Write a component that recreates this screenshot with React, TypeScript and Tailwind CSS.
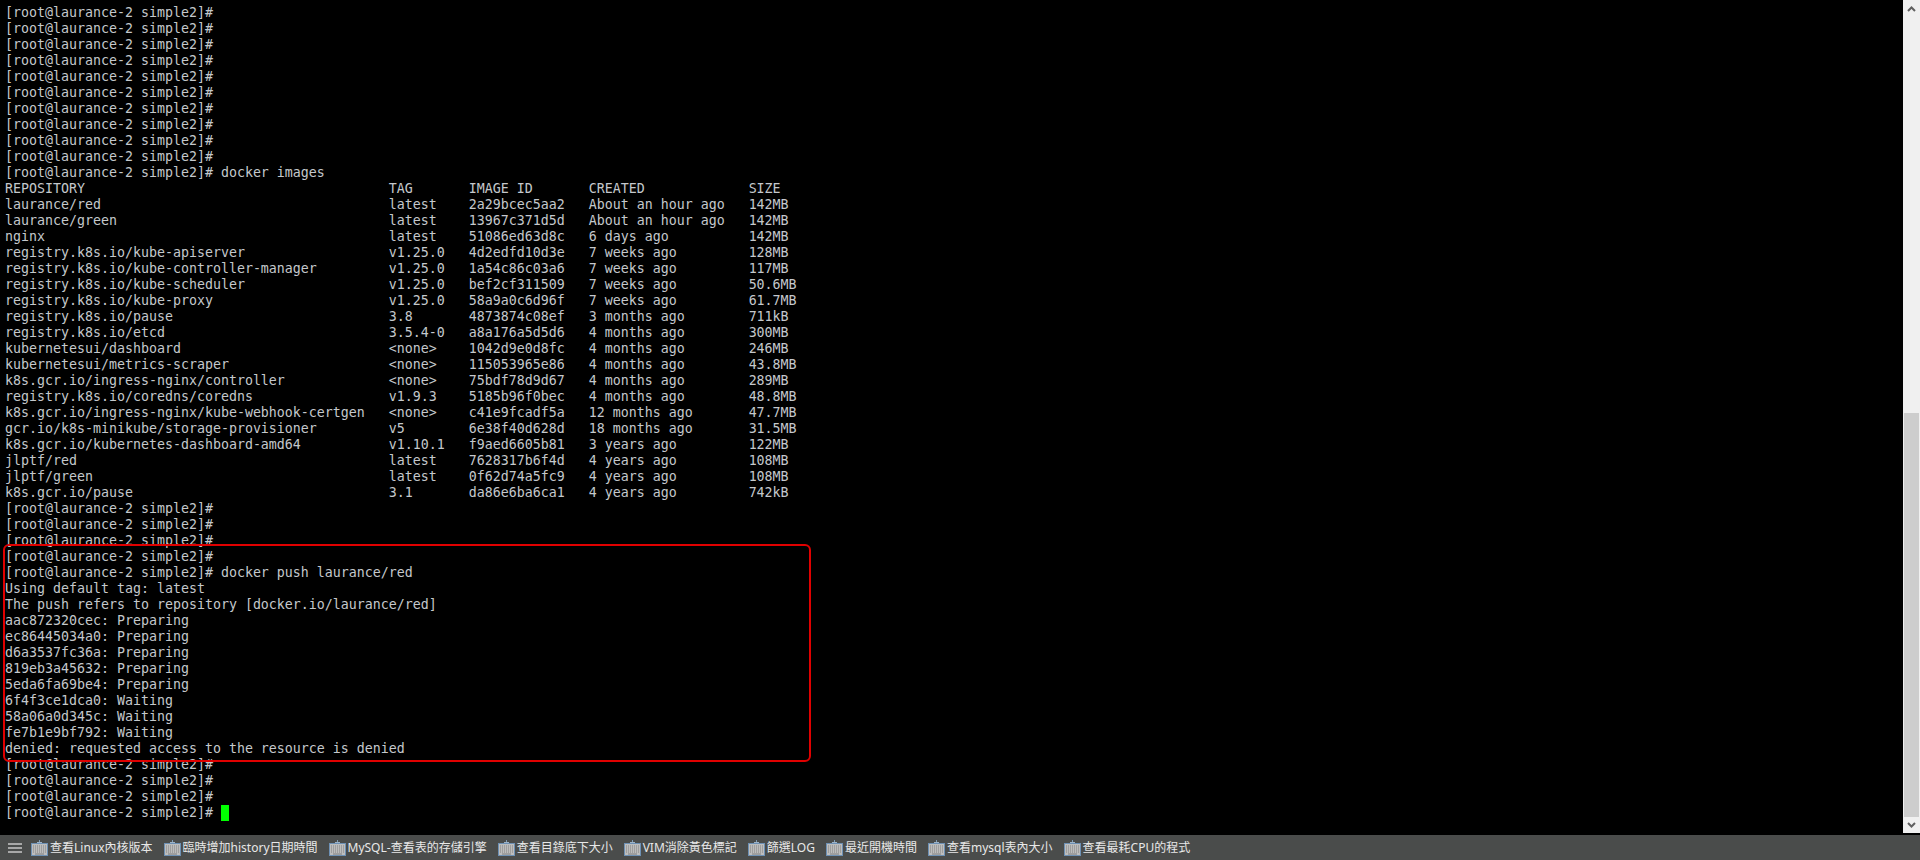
const p = "[root@laurance-2 simple2]#";
const rows = [
  ["REPOSITORY", "TAG", "IMAGE ID", "CREATED", "SIZE"],
  ["laurance/red", "latest", "2a29bcec5aa2", "About an hour ago", "142MB"],
  ["laurance/green", "latest", "13967c371d5d", "About an hour ago", "142MB"],
  ["nginx", "latest", "51086ed63d8c", "6 days ago", "142MB"],
  ["registry.k8s.io/kube-apiserver", "v1.25.0", "4d2edfd10d3e", "7 weeks ago", "128MB"],
  ["registry.k8s.io/kube-controller-manager", "v1.25.0", "1a54c86c03a6", "7 weeks ago", "117MB"],
  ["registry.k8s.io/kube-scheduler", "v1.25.0", "bef2cf311509", "7 weeks ago", "50.6MB"],
  ["registry.k8s.io/kube-proxy", "v1.25.0", "58a9a0c6d96f", "7 weeks ago", "61.7MB"],
  ["registry.k8s.io/pause", "3.8", "4873874c08ef", "3 months ago", "711kB"],
  ["registry.k8s.io/etcd", "3.5.4-0", "a8a176a5d5d6", "4 months ago", "300MB"],
  ["kubernetesui/dashboard", "<none>", "1042d9e0d8fc", "4 months ago", "246MB"],
  ["kubernetesui/metrics-scraper", "<none>", "115053965e86", "4 months ago", "43.8MB"],
  ["k8s.gcr.io/ingress-nginx/controller", "<none>", "75bdf78d9d67", "4 months ago", "289MB"],
  ["registry.k8s.io/coredns/coredns", "v1.9.3", "5185b96f0bec", "4 months ago", "48.8MB"],
  ["k8s.gcr.io/ingress-nginx/kube-webhook-certgen", "<none>", "c41e9fcadf5a", "12 months ago", "47.7MB"],
  ["gcr.io/k8s-minikube/storage-provisioner", "v5", "6e38f40d628d", "18 months ago", "31.5MB"],
  ["k8s.gcr.io/kubernetes-dashboard-amd64", "v1.10.1", "f9aed6605b81", "3 years ago", "122MB"],
  ["jlptf/red", "latest", "7628317b6f4d", "4 years ago", "108MB"],
  ["jlptf/green", "latest", "0f62d74a5fc9", "4 years ago", "108MB"],
  ["k8s.gcr.io/pause", "3.1", "da86e6ba6ca1", "4 years ago", "742kB"],
].map((r) => r[0].padEnd(48) + r[1].padEnd(10) + r[2].padEnd(15) + r[3].padEnd(20) + r[4]);

const lines = [
  ...Array(10).fill(p),
  p + " docker images",
  ...rows,
  p, p, p, p,
  p + " docker push laurance/red",
  "Using default tag: latest",
  "The push refers to repository [docker.io/laurance/red]",
  "aac872320cec: Preparing",
  "ec86445034a0: Preparing",
  "d6a3537fc36a: Preparing",
  "819eb3a45632: Preparing",
  "5eda6fa69be4: Preparing",
  "6f4f3ce1dca0: Waiting",
  "58a06a0d345c: Waiting",
  "fe7b1e9bf792: Waiting",
  "denied: requested access to the resource is denied",
  p, p, p, p,
];

const items = [
  "查看Linux內核版本",
  "臨時增加history日期時間",
  "MySQL-查看表的存儲引擎",
  "查看目錄底下大小",
  "VIM消除黃色標記",
  "篩選LOG",
  "最近開機時間",
  "查看mysql表內大小",
  "查看最耗CPU的程式",
];

function Kb() {
  return (
    <svg width="17" height="16" viewBox="0 0 17 16" className="shrink-0">
      <rect x="8" y="0" width="1" height="3" fill="#7f9db9" />
      <rect x="6" y="2" width="5" height="1" fill="#9fb4c8" />
      <rect x="0.5" y="3.5" width="16" height="12" fill="#bdbdbd" stroke="#6d90b4" />
      <path d="M2 6h13M2 8h13M2 10h13M2 12h13" stroke="#808080" strokeWidth="1" strokeDasharray="1 1" />
      <path d="M4 14h9" stroke="#808080" strokeWidth="1" />
    </svg>
  );
}

export default function App() {
  return (
    <div className="flex h-[860px] w-[1920px] flex-col overflow-hidden bg-black">
      <div className="flex h-[835px] shrink-0">
        <div className="relative flex-1 overflow-hidden pl-[5px] pt-[5px]">
          <pre className="font-['DejaVu_Sans_Mono',monospace] text-[13.29px] leading-[16px] text-[#c4c8cc]">
            {lines.map((l, i) => (
              <div key={i} className="h-4">
                {l}
                {i === lines.length - 1 && <span> <span className="inline-block h-4 w-2 bg-[#00ff00] align-top" /></span>}
              </div>
            ))}
          </pre>
          <div className="absolute left-[3px] top-[544px] h-[218px] w-[808px] rounded-[6px] border-2 border-[#e00000]" />
        </div>
        <div className="flex h-[833px] w-[17px] shrink-0 flex-col border-x border-[#f0f0f0] bg-[#f0f0f0]">
          <div className="flex h-[17px] items-center justify-center">
            <svg width="9" height="6" viewBox="0 0 9 6"><path d="M1 5l3.5-3.5L8 5" fill="none" stroke="#606060" strokeWidth="2" /></svg>
          </div>
          <div className="mt-[396px] h-[404px] bg-[#cdcdcd]" />
          <div className="flex h-[16px] items-center justify-center">
            <svg width="9" height="6" viewBox="0 0 9 6"><path d="M1 1l3.5 3.5L8 1" fill="none" stroke="#606060" strokeWidth="2" /></svg>
          </div>
        </div>
      </div>
      <div className="flex h-[25px] items-center bg-[#4a4c4b] pl-2 font-['Noto_Sans','Noto_Sans_CJK_TC',sans-serif] text-[12px] text-[#e8e8e8]">
        <div className="mr-[9px] flex w-[14px] flex-col gap-[2px]">
          <div className="h-[2px] bg-[#a8a8a8]" />
          <div className="h-[2px] bg-[#a8a8a8]" />
          <div className="h-[2px] bg-[#a8a8a8]" />
        </div>
        {items.map((t) => (
          <div key={t} className="mr-[11px] flex items-center gap-[2px] whitespace-nowrap">
            <Kb />
            <span>{t}</span>
          </div>
        ))}
      </div>
    </div>
  );
}
